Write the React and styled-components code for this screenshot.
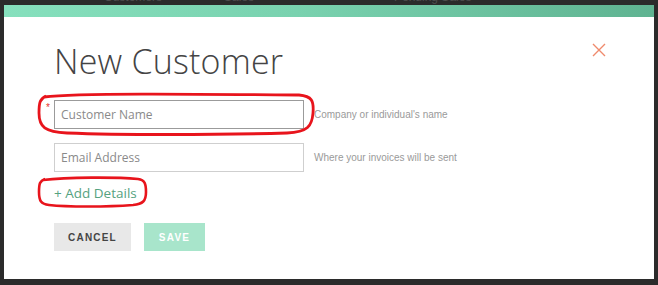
import React from "react";
import styled, { createGlobalStyle } from "styled-components";

const GlobalStyle = createGlobalStyle`
  html, body {
    margin: 0;
    padding: 0;
    background: #2b2b2b;
  }
  body {
    font-family: "Open Sans", "Liberation Sans", sans-serif;
  }
`;

const Page = styled.div`
  width: 658px;
  height: 285px;
  overflow: hidden;
  background: #2b2b2b;
`;

const BackNav = styled.div`
  height: 5px;
  overflow: hidden;
  position: relative;
`;

const BackNavItem = styled.span`
  position: absolute;
  top: -10px;
  left: ${(p) => p.x}px;
  font-family: "Liberation Sans", sans-serif;
  font-size: 12px;
  line-height: 14px;
  color: #4e4e4e;
  white-space: nowrap;
`;

const Modal = styled.div`
  position: relative;
  margin: 0 4px 0 4px;
  width: 650px;
  height: 274px;
  background: #fff;
  display: flex;
  flex-direction: column;
`;

const TopBar = styled.div`
  height: 12px;
  background: linear-gradient(90deg, #86e0bd 0%, #79d2af 45%, #5fb391 100%);
`;

const Body = styled.div`
  padding: 22px 0 0 50px;
  display: flex;
  flex-direction: column;
`;

const Title = styled.h1`
  margin: 0;
  font-family: "Open Sans", sans-serif;
  font-weight: 300;
  font-size: 34px;
  line-height: 44px;
  color: #444;
  letter-spacing: 0.2px;
`;

const CloseButton = styled.button`
  position: absolute;
  top: 37px;
  right: 47px;
  width: 16px;
  height: 16px;
  padding: 0;
  border: 0;
  background: none;
  cursor: pointer;
  svg {
    display: block;
  }
`;

const Fields = styled.div`
  margin-top: 17px;
  display: flex;
  flex-direction: column;
  gap: 14px;
`;

const FieldRow = styled.div`
  position: relative;
  display: flex;
  align-items: center;
  gap: 10px;
`;

const Required = styled.span`
  position: absolute;
  left: -8px;
  top: 2px;
  color: #e5322b;
  font-size: 10px;
  font-family: "Liberation Sans", sans-serif;
`;

const Input = styled.input`
  box-sizing: border-box;
  width: 250px;
  height: 29px;
  padding: 0 6px;
  border: 1px solid ${(p) => (p.active ? "#9b9b9b" : "#cfcfcf")};
  background: #fff;
  font-family: "Open Sans", sans-serif;
  font-size: 12px;
  color: #333;
  outline: none;
  &::placeholder {
    color: #8a8a8a;
  }
`;

const Hint = styled.span`
  font-family: "Liberation Sans", sans-serif;
  font-size: 10px;
  color: #9a9a9a;
  white-space: nowrap;
`;

const AddDetails = styled.a`
  margin-top: 12px;
  align-self: flex-start;
  font-family: "Open Sans", sans-serif;
  font-size: 13.5px;
  line-height: 18px;
  color: #55a27f;
  text-decoration: none;
  cursor: pointer;
`;

const Actions = styled.div`
  margin-top: 21px;
  display: flex;
  gap: 13px;
`;

const Button = styled.button`
  height: 28px;
  padding: 0;
  width: ${(p) => p.w}px;
  border: 0;
  background: ${(p) => (p.primary ? "#a8e5cb" : "#e8e8e8")};
  color: ${(p) => (p.primary ? "#fff" : "#444")};
  font-family: "Liberation Sans", sans-serif;
  font-weight: 700;
  font-size: 10px;
  letter-spacing: 1.2px;
  cursor: pointer;
`;

const Annotation = styled.svg`
  position: absolute;
  left: ${(p) => p.x}px;
  top: ${(p) => p.y}px;
  pointer-events: none;
  overflow: visible;
`;

export default function App() {
  return (
    <Page>
      <GlobalStyle />
      <BackNav>
        <BackNavItem x={104}>Customers</BackNavItem>
        <BackNavItem x={224}>Sales</BackNavItem>
        <BackNavItem x={394}>Pending Sales</BackNavItem>
      </BackNav>
      <Modal>
        <TopBar />
        <CloseButton aria-label="Close">
          <svg width="16" height="16" viewBox="0 0 16 16">
            <path d="M2 2 L14 14 M14 2 L2 14" stroke="#ef8a6d" strokeWidth="1.4" fill="none" />
          </svg>
        </CloseButton>
        <Body>
          <Title>New Customer</Title>
          <Fields>
            <FieldRow>
              <Required>*</Required>
              <Input active placeholder="Customer Name" />
              <Hint>Company or individual's name</Hint>
            </FieldRow>
            <FieldRow>
              <Input placeholder="Email Address" />
              <Hint>Where your invoices will be sent</Hint>
            </FieldRow>
          </Fields>
          <AddDetails>+ Add Details</AddDetails>
          <Actions>
            <Button w={77}>CANCEL</Button>
            <Button primary w={61}>SAVE</Button>
          </Actions>
        </Body>
        <Annotation x={33} y={87} width="278" height="44" viewBox="0 0 278 44">
          <path
            d="M7 5 C40 1 150 2 262 3 C275 4 277 9 276 21 C275 34 271 40 250 41 C180 43 80 43 30 41 C8 40 2 35 2 21 C2 10 3 7 9 4"
            stroke="#e8141c"
            strokeWidth="2.8"
            fill="none"
          />
        </Annotation>
        <Annotation x={33} y={171} width="110" height="32" viewBox="0 0 110 32">
          <path
            d="M6 4 C30 1 80 1 101 3 C108 4 109 8 109 16 C109 25 106 28 96 29 C70 31 30 31 12 29 C4 28 2 25 2 16 C2 7 3 5 8 3"
            stroke="#e8141c"
            strokeWidth="2.6"
            fill="none"
          />
        </Annotation>
      </Modal>
    </Page>
  );
}
